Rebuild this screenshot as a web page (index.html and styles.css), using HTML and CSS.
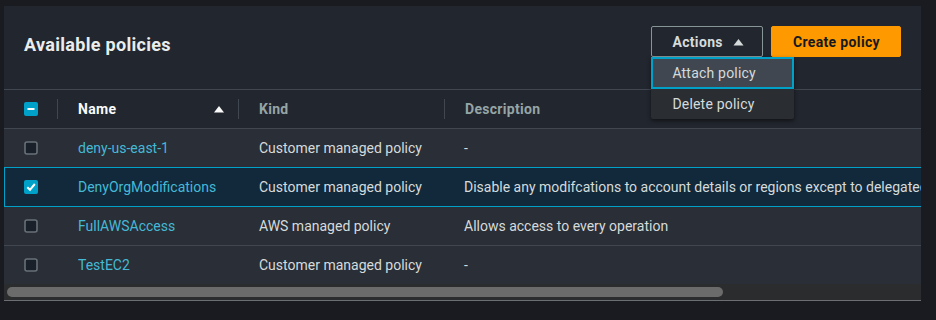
FILE: index.html
```html
<!DOCTYPE html>
<html lang="en">
<head>
    <meta charset="UTF-8">
    <meta name="viewport" content="width=device-width, initial-scale=1.0">
    <title>Available policies</title>
    <link rel="stylesheet" href="styles.css">
</head>
<body>
    <div class="panel">
        <div class="panel-header">
            <h2 class="panel-title">Available policies</h2>
            <div class="panel-actions">
                <div class="dropdown">
                    <button class="btn btn-normal">
                        Actions
                        <svg class="caret" viewBox="0 0 10 8"><polygon points="0,7.5 5,1 10,7.5" fill="currentColor"/></svg>
                    </button>
                    <ul class="dropdown-menu">
                        <li class="menu-item focused">Attach policy</li>
                        <li class="menu-item">Delete policy</li>
                    </ul>
                </div>
                <button class="btn btn-primary">Create policy</button>
            </div>
        </div>

        <div class="table-wrap">
            <table class="policy-table">
                <colgroup>
                    <col class="col-select">
                    <col class="col-name">
                    <col class="col-kind">
                    <col class="col-desc">
                </colgroup>
                <thead>
                    <tr>
                        <th class="select-cell">
                            <svg class="checkbox" viewBox="0 0 14 14">
                                <rect x="0" y="0" width="14" height="14" rx="2" fill="#00a1c9"/>
                                <line x1="3.5" y1="7" x2="10.5" y2="7" stroke="#fff" stroke-width="2"/>
                            </svg>
                        </th>
                        <th>
                            <div class="th-inner sorted">
                                Name
                                <svg class="sort-caret" viewBox="0 0 10 8"><polygon points="0,7.5 5,1 10,7.5" fill="currentColor"/></svg>
                            </div>
                        </th>
                        <th><div class="th-inner">Kind</div></th>
                        <th><div class="th-inner">Description</div></th>
                    </tr>
                </thead>
                <tbody>
                    <tr>
                        <td class="select-cell">
                            <svg class="checkbox" viewBox="0 0 14 14"><rect x="1" y="1" width="12" height="12" rx="2" fill="#1a2029" stroke="#687078" stroke-width="1.6"/></svg>
                        </td>
                        <td><a href="#" class="policy-link">deny-us-east-1</a></td>
                        <td>Customer managed policy</td>
                        <td>-</td>
                    </tr>
                    <tr class="selected">
                        <td class="select-cell">
                            <svg class="checkbox" viewBox="0 0 14 14">
                                <rect x="0" y="0" width="14" height="14" rx="2" fill="#00a1c9"/>
                                <polyline points="3.3,7.2 6,9.8 10.8,4" fill="none" stroke="#fff" stroke-width="2"/>
                            </svg>
                        </td>
                        <td><a href="#" class="policy-link">DenyOrgModifications</a></td>
                        <td>Customer managed policy</td>
                        <td>Disable any modifcations to account details or regions except to delegated administrators</td>
                    </tr>
                    <tr>
                        <td class="select-cell">
                            <svg class="checkbox" viewBox="0 0 14 14"><rect x="1" y="1" width="12" height="12" rx="2" fill="#1a2029" stroke="#687078" stroke-width="1.6"/></svg>
                        </td>
                        <td><a href="#" class="policy-link">FullAWSAccess</a></td>
                        <td>AWS managed policy</td>
                        <td>Allows access to every operation</td>
                    </tr>
                    <tr>
                        <td class="select-cell">
                            <svg class="checkbox" viewBox="0 0 14 14"><rect x="1" y="1" width="12" height="12" rx="2" fill="#1a2029" stroke="#687078" stroke-width="1.6"/></svg>
                        </td>
                        <td><a href="#" class="policy-link">TestEC2</a></td>
                        <td>Customer managed policy</td>
                        <td>-</td>
                    </tr>
                </tbody>
            </table>
        </div>
        <div class="scrollbar">
            <div class="scrollbar-thumb"></div>
        </div>
    </div>
</body>
</html>
```

FILE: styles.css
```css
* {
    margin: 0;
    padding: 0;
    box-sizing: border-box;
}

body {
    font-family: Roboto, 'Liberation Sans', Arial, sans-serif;
    font-size: 14px;
    color: #d5dbdb;
    background: #1a1b20;
    padding: 6px 0 0 4px;
}

.panel {
    width: 917px;
    background: #22262e;
    border-bottom: 1px solid #6b6e72;
}

.panel-header {
    height: 84px;
    padding: 20px 20px 0 20px;
    display: flex;
    justify-content: space-between;
    align-items: flex-start;
    border-bottom: 1px solid #414750;
}

.panel-title {
    font-size: 18px;
    font-weight: bold;
    letter-spacing: 0.3px;
    color: #eaeded;
    line-height: 31px;
    margin-top: 3px;
}

.panel-actions {
    display: flex;
    gap: 8px;
}

.dropdown {
    position: relative;
}

.btn {
    height: 31px;
    display: inline-flex;
    align-items: center;
    font-family: inherit;
    font-size: 14px;
    font-weight: bold;
    letter-spacing: 0.35px;
    border-radius: 2px;
    cursor: pointer;
}

.btn-normal {
    background: transparent;
    color: #d5dbdb;
    border: 1px solid #879596;
    padding: 0 18px 0 20px;
    gap: 10px;
}

.btn-normal .caret {
    width: 11px;
    height: 8px;
}

.btn-primary {
    background: #ff9900;
    color: #16191f;
    border: 1px solid #ff9900;
    padding: 0 20px 0 21px;
}

.dropdown-menu {
    position: absolute;
    top: 100%;
    left: 0;
    width: 143px;
    list-style: none;
    background: #2a2e33;
    border-radius: 0 0 2px 2px;
    box-shadow: 0 2px 4px rgba(0, 0, 0, 0.5);
    z-index: 10;
}

.menu-item {
    padding: 5px 21px;
    line-height: 20px;
    color: #d5dbdb;
    letter-spacing: 0.2px;
}

.menu-item.focused {
    background: #414750;
    border: 2px solid #00a1c9;
    padding: 3px 19px;
    line-height: 22px;
}

.table-wrap {
    overflow: hidden;
}

.policy-table {
    width: 1174px;
    table-layout: fixed;
    border-collapse: separate;
    border-spacing: 0;
}

.col-select { width: 53px; }
.col-name { width: 181px; }
.col-kind { width: 206px; }

.policy-table th {
    height: 38px;
    text-align: left;
    font-weight: bold;
    letter-spacing: 0.3px;
    color: #95a5a6;
    vertical-align: middle;
}

.policy-table th.select-cell {
    padding-left: 20px;
}

.th-inner {
    display: flex;
    align-items: center;
    justify-content: space-between;
    height: 20px;
    border-left: 1px solid #414750;
    padding: 0 14px 0 20px;
    line-height: 20px;
}

.th-inner.sorted {
    color: #fafafa;
}

.sort-caret {
    width: 10px;
    height: 8px;
}

.checkbox {
    width: 14px;
    height: 14px;
    display: block;
}

.policy-table td {
    background: #2a2e36;
    border-top: 1px solid #414750;
    padding: 9px 20px 9px 21px;
    line-height: 20px;
    white-space: nowrap;
    overflow: hidden;
    vertical-align: middle;
}

.policy-table td.select-cell {
    padding-left: 20px;
}

.policy-table td:last-child {
    padding-left: 20px;
}

.policy-table tr.selected td {
    background: #12293b;
    border-top-color: #00a1c9;
}

.policy-table tr.selected td:first-child {
    box-shadow: inset 1px 0 0 #00a1c9;
}

.policy-table tr.selected + tr td {
    border-top-color: #00a1c9;
}

.policy-link {
    color: #44b9d6;
    text-decoration: none;
}

.policy-link:hover {
    text-decoration: underline;
}

.scrollbar {
    height: 16px;
    background: #2b2c2e;
    padding: 3px 0 0 3px;
}

.scrollbar-thumb {
    width: 716px;
    height: 10px;
    border-radius: 5px;
    background: #6b6b6b;
}
```
